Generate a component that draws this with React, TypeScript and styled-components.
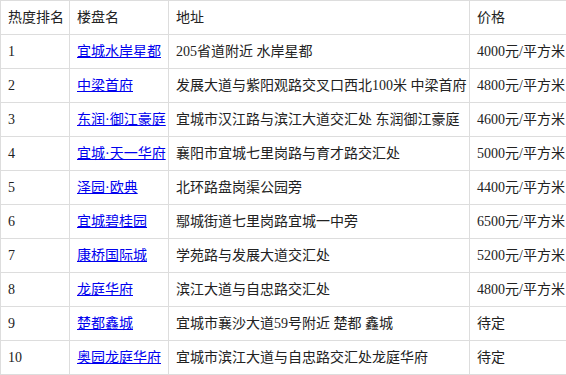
import styled, { createGlobalStyle } from 'styled-components';

interface Estate {
  rank: string;
  name: string;
  address: string;
  price: string;
}

const estates: Estate[] = [
  { rank: '1', name: '宜城水岸星都', address: '205省道附近 水岸星都', price: '4000元/平方米' },
  { rank: '2', name: '中梁首府', address: '发展大道与紫阳观路交叉口西北100米 中梁首府', price: '4800元/平方米' },
  { rank: '3', name: '东润·御江豪庭', address: '宜城市汉江路与滨江大道交汇处 东润御江豪庭', price: '4600元/平方米' },
  { rank: '4', name: '宜城·天一华府', address: '襄阳市宜城七里岗路与育才路交汇处', price: '5000元/平方米' },
  { rank: '5', name: '泽园·欧典', address: '北环路盘岗渠公园旁', price: '4400元/平方米' },
  { rank: '6', name: '宜城碧桂园', address: '鄢城街道七里岗路宜城一中旁', price: '6500元/平方米' },
  { rank: '7', name: '康桥国际城', address: '学苑路与发展大道交汇处', price: '5200元/平方米' },
  { rank: '8', name: '龙庭华府', address: '滨江大道与自忠路交汇处', price: '4800元/平方米' },
  { rank: '9', name: '楚都鑫城', address: '宜城市襄沙大道59号附近 楚都 鑫城', price: '待定' },
  { rank: '10', name: '奥园龙庭华府', address: '宜城市滨江大道与自忠路交汇处龙庭华府', price: '待定' },
];

const GlobalStyle = createGlobalStyle`
  body {
    margin: 0;
    background: #fff;
    font-family: "Liberation Serif", "Noto Sans CJK SC", serif;
    color: #222;
  }
`;

const Table = styled.table`
  width: 566px;
  border-collapse: collapse;
  table-layout: fixed;
  font-size: 14px;
`;

const Cell = styled.td`
  border: 1px solid #ddd;
  padding: 0 7px;
  height: 33px;
  line-height: 17px;
  text-align: left;
  font-weight: normal;
  white-space: nowrap;
`;

const HeadCell = styled(Cell).attrs({ as: 'th' })``;

const Link = styled.a`
  color: #0000ee;
  text-decoration: underline;
`;

export default function App() {
  return (
    <>
      <GlobalStyle />
      <Table>
        <colgroup>
          <col style={{ width: 69 }} />
          <col style={{ width: 99 }} />
          <col style={{ width: 301 }} />
          <col style={{ width: 97 }} />
        </colgroup>
        <thead>
          <tr>
            <HeadCell>热度排名</HeadCell>
            <HeadCell>楼盘名</HeadCell>
            <HeadCell>地址</HeadCell>
            <HeadCell>价格</HeadCell>
          </tr>
        </thead>
        <tbody>
          {estates.map(e => (
            <tr key={e.rank}>
              <Cell>{e.rank}</Cell>
              <Cell>
                <Link href="#">{e.name}</Link>
              </Cell>
              <Cell>{e.address}</Cell>
              <Cell>{e.price}</Cell>
            </tr>
          ))}
        </tbody>
      </Table>
    </>
  );
}
